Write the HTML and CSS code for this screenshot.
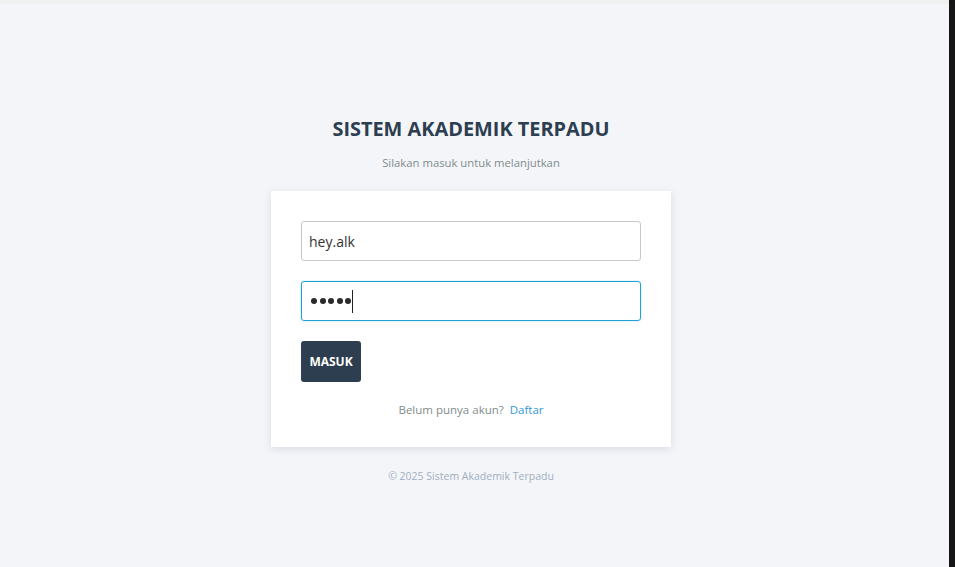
FILE: index.html
```html
<!DOCTYPE html>
<html lang="id">
<head>
<meta charset="utf-8">
<title>Sistem Akademik Terpadu</title>
<link rel="stylesheet" href="styles.css">
</head>
<body>
<div class="frame">
  <div class="page">
    <div class="topstrip"></div>
    <main class="main">
      <h1 class="title">SISTEM AKADEMIK TERPADU</h1>
      <p class="subtitle">Silakan masuk untuk melanjutkan</p>
      <form class="card">
        <div class="field">hey.alk</div>
        <div class="field focused">
          <span class="dots"><i class="dot"></i><i class="dot"></i><i class="dot"></i><i class="dot"></i><i class="dot"></i></span><span class="caret"></span>
        </div>
        <button type="button" class="btn">MASUK</button>
        <p class="register">Belum punya akun?&nbsp; <a href="#" class="link">Daftar</a></p>
      </form>
      <p class="footer">© 2025 Sistem Akademik Terpadu</p>
    </main>
  </div>
  <div class="edge"></div>
</div>
</body>
</html>
```
FILE: styles.css
```css
html, body {
  margin: 0;
  padding: 0;
  height: 100%;
}
body {
  font-family: "Open Sans", "Noto Sans", sans-serif;
  background: #f4f5f9;
}
.frame {
  display: flex;
  height: 567px;
}
.page {
  flex: 1;
  display: flex;
  flex-direction: column;
}
.topstrip {
  height: 4px;
  background: #f0f0f0;
}
.edge {
  width: 6px;
  background: #151515;
}
.main {
  display: flex;
  flex-direction: column;
  align-items: center;
  padding-top: 113px;
  padding-right: 7px;
}
.title {
  margin: 0;
  font-size: 19.9px;
  font-weight: 700;
  color: #2c3e50;
  line-height: 24px;
}
.subtitle {
  margin: 14px 0 0;
  font-size: 11.3px;
  color: #7f8c8d;
  line-height: 16px;
}
.card {
  margin-top: 20px;
  width: 400px;
  box-sizing: border-box;
  padding: 30px 30px 29px;
  background: #fff;
  box-shadow: 0 2px 8px rgba(40, 50, 80, 0.12);
  display: flex;
  flex-direction: column;
}
.field {
  height: 40px;
  box-sizing: border-box;
  border: 1px solid #c8c8c8;
  border-radius: 3px;
  padding: 0 7px;
  display: flex;
  align-items: center;
  font-size: 14px;
  color: #333;
  margin-bottom: 20px;
}
.field.focused {
  border-color: #1ea0d8;
  box-shadow: 0 0 2px rgba(30, 160, 216, 0.35);
  padding-left: 9px;
}
.dots {
  display: flex;
  gap: 2.5px;
}
.dot {
  width: 6px;
  height: 6px;
  border-radius: 50%;
  background: #2a2a2a;
}
.caret {
  width: 1px;
  height: 23px;
  background: #222;
  margin-left: 0.5px;
}
.btn {
  align-self: flex-start;
  width: 60px;
  height: 41px;
  border: none;
  border-radius: 3px;
  background: #2c3e50;
  color: #fff;
  font-family: inherit;
  font-size: 12px;
  font-weight: 700;
  padding: 0;
}
.register {
  margin: 20px 0 0;
  text-align: center;
  font-size: 11.5px;
  color: #7f8c8d;
  line-height: 16px;
}
.link {
  color: #3498db;
  text-decoration: none;
}
.footer {
  margin: 22px 0 0;
  font-size: 10.5px;
  color: #a0aec0;
}
```
